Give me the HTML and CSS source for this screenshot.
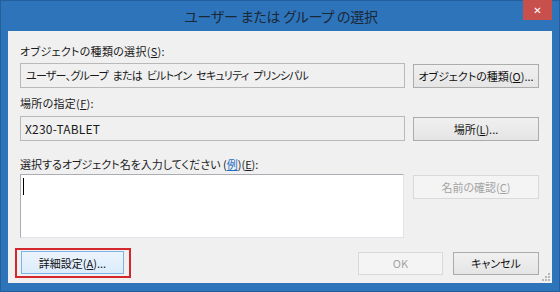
FILE: index.html
```html
<!DOCTYPE html>
<html lang="ja">
<head>
    <meta charset="UTF-8">
    <title>ユーザー または グループ の選択</title>
    <link rel="stylesheet" href="styles.css">
</head>
<body>
    <div class="window">
        <div class="titlebar">
            <span class="title">ユーザー または グループ の選択</span>
            <span class="close">&#x2715;</span>
        </div>
        <div class="client">
            <div class="label label-1">オブジェクトの種類の選択(<u>S</u>):</div>
            <div class="row">
                <div class="field field-kana">ユーザー、グループ または ビルトイン セキュリティ プリンシパル</div>
                <div class="btn">オブジェクトの種類(<u>O</u>)...</div>
            </div>

            <div class="label label-2">場所の指定(<u>F</u>):</div>
            <div class="row">
                <div class="field field-latin">X230-TABLET</div>
                <div class="btn">場所(<u>L</u>)...</div>
            </div>

            <div class="label label-3">選択するオブジェクト名を入力してください (<a class="link">例</a>)(<u>E</u>):</div>
            <div class="row row-top">
                <div class="names"><span class="caret"></span></div>
                <div class="btn btn-disabled">名前の確認(<u>C</u>)</div>
            </div>

            <div class="footer-row">
                <div class="highlight-box">
                    <div class="btn btn-default">詳細設定(<u>A</u>)...</div>
                </div>
                <div class="spacer"></div>
                <div class="btn btn-small btn-disabled">OK</div>
                <div class="btn btn-small">キャンセル</div>
            </div>
            <div class="grip">
                <svg width="8" height="8" viewBox="0 0 8 8">
                    <rect x="6" y="0" width="2" height="2" fill="#b8b8b8"/>
                    <rect x="3" y="3" width="2" height="2" fill="#b8b8b8"/>
                    <rect x="6" y="3" width="2" height="2" fill="#b8b8b8"/>
                    <rect x="0" y="6" width="2" height="2" fill="#b8b8b8"/>
                    <rect x="3" y="6" width="2" height="2" fill="#b8b8b8"/>
                    <rect x="6" y="6" width="2" height="2" fill="#b8b8b8"/>
                </svg>
            </div>
        </div>
    </div>
</body>
</html>
```

FILE: styles.css
```css
/* Windows 8 風ダイアログ */
body {
    margin: 0;
    padding: 0;
    font-family: "Noto Sans CJK JP", "Liberation Sans", sans-serif;
    font-size: 11px;
    font-feature-settings: "palt";
    color: #1a1a1a;
}
.window {
    width: 560px;
    height: 292px;
    background: #2d74bb;
    box-sizing: border-box;
    border: 1px solid #245f9c;
    display: flex;
    flex-direction: column;
}
.titlebar {
    height: 30px;
    position: relative;
    display: flex;
    align-items: center;
    justify-content: center;
}
.title {
    font-size: 14px;
    letter-spacing: -0.2px;
    color: #1c2836;
    margin-top: -1px;
    margin-left: 2px;
}
.close {
    position: absolute;
    top: -1px;
    right: 7px;
    width: 29px;
    height: 20px;
    background: #c7504c;
    color: #fff;
    font-family: "DejaVu Sans", sans-serif;
    font-size: 10px;
    font-weight: bold;
    display: flex;
    align-items: center;
    justify-content: center;
}
.client {
    flex: 1;
    margin: 0 7px 8px 7px;
    background: #f0f0f0;
    padding: 0 13px 0 12px;
    position: relative;
    display: flex;
    flex-direction: column;
}
.label {
    line-height: 16px;
    height: 16px;
    white-space: nowrap;
}
.label-1 {
    margin-top: 12px;
    margin-bottom: 4px;
    letter-spacing: 0.3px;
}
.label-2 {
    margin-top: 7px;
    margin-bottom: 5px;
    letter-spacing: 0.3px;
}
.label-3 {
    margin-top: 15px;
    margin-bottom: 2px;
}
.row {
    display: flex;
    align-items: center;
    justify-content: space-between;
}
.row-top {
    align-items: flex-start;
}
.field {
    width: 385px;
    height: 25px;
    box-sizing: border-box;
    border: 1px solid #b9b9b9;
    background: #f0f0f0;
    padding: 0 5px;
    line-height: 23px;
    white-space: nowrap;
}
.field-kana {
    letter-spacing: -0.75px;
    word-spacing: 3px;
}
.field-latin {
    font-size: 12px;
    letter-spacing: 0.2px;
    padding-left: 4px;
}
.btn {
    width: 126px;
    height: 24px;
    box-sizing: border-box;
    border: 1px solid #acacac;
    background: linear-gradient(#f0f0f0, #e5e5e5);
    display: flex;
    align-items: center;
    justify-content: center;
    white-space: nowrap;
    color: #111;
}
.btn-disabled {
    background: #f4f4f4;
    border-color: #d9d9d9;
    color: #a3a3a3;
    margin-top: 1px;
}
.names {
    width: 384px;
    height: 64px;
    box-sizing: border-box;
    background: #fff;
    border: 1px solid #e2e3ea;
    border-top-color: #abadb3;
    border-left-color: #abadb3;
    position: relative;
}
.caret {
    position: absolute;
    left: 2px;
    top: 3px;
    width: 1px;
    height: 17px;
    background: #000;
}
.link {
    color: #1f6ec4;
    text-decoration: underline;
}
.footer-row {
    display: flex;
    align-items: center;
    gap: 10px;
    margin-top: 10px;
}
.highlight-box {
    margin-left: -5px;
    border: 2px solid #d4262b;
    padding: 1px 5px 2px 4px;
}
.btn-default {
    width: 103px;
    height: 23px;
    border-color: #7eb4ea;
    background: linear-gradient(#ecf4fc, #dcecfc);
}
.btn-small {
    width: 86px;
    height: 23px;
}
.btn-small.btn-disabled {
    width: 85px;
    margin-top: 0;
}
.spacer {
    flex: 1;
}
.grip {
    position: absolute;
    right: 2px;
    bottom: 2px;
    line-height: 0;
}
```
